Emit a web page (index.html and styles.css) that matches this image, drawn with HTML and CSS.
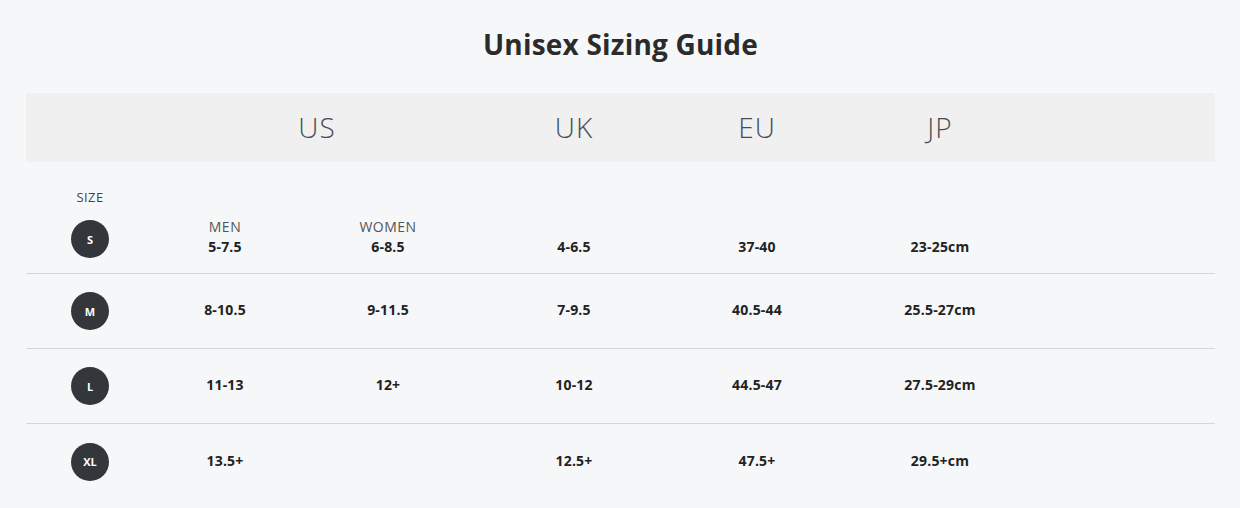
FILE: index.html
```html
<!DOCTYPE html>
<html lang="en">
<head>
<meta charset="utf-8">
<title>Unisex Sizing Guide</title>
<link rel="stylesheet" href="styles.css">
</head>
<body>
<main class="page">
  <h1 class="title">Unisex Sizing Guide</h1>
  <div class="grid head">
    <div class="cell"></div>
    <div class="cell span2">US</div>
    <div class="cell">UK</div>
    <div class="cell">EU</div>
    <div class="cell">JP</div>
    <div class="cell"></div>
  </div>
  <div class="size-label">SIZE</div>
  <div class="grid row first">
    <div class="cell"><span class="badge">S</span></div>
    <div class="cell stack"><span class="sub">MEN</span><span class="val">5-7.5</span></div>
    <div class="cell stack"><span class="sub">WOMEN</span><span class="val">6-8.5</span></div>
    <div class="cell stack"><span class="sub"></span><span class="val">4-6.5</span></div>
    <div class="cell stack"><span class="sub"></span><span class="val">37-40</span></div>
    <div class="cell stack"><span class="sub"></span><span class="val">23-25cm</span></div>
    <div class="cell"></div>
  </div>
  <div class="grid row">
    <div class="cell"><span class="badge">M</span></div>
    <div class="cell val">8-10.5</div>
    <div class="cell val">9-11.5</div>
    <div class="cell val">7-9.5</div>
    <div class="cell val">40.5-44</div>
    <div class="cell val">25.5-27cm</div>
    <div class="cell"></div>
  </div>
  <div class="grid row">
    <div class="cell"><span class="badge">L</span></div>
    <div class="cell val">11-13</div>
    <div class="cell val">12+</div>
    <div class="cell val">10-12</div>
    <div class="cell val">44.5-47</div>
    <div class="cell val">27.5-29cm</div>
    <div class="cell"></div>
  </div>
  <div class="grid row last">
    <div class="cell"><span class="badge">XL</span></div>
    <div class="cell val">13.5+</div>
    <div class="cell val"></div>
    <div class="cell val">12.5+</div>
    <div class="cell val">47.5+</div>
    <div class="cell val">29.5+cm</div>
    <div class="cell"></div>
  </div>
</main>
</body>
</html>
```

FILE: styles.css
```css
* { box-sizing: border-box; }
html, body {
  margin: 0;
  padding: 0;
  background: #f6f7f9;
  font-family: "Open Sans", "DejaVu Sans", sans-serif;
  color: #222;
}
.page {
  padding: 0 25px 0 26px;
}
.title {
  margin: 27px 0 32px;
  height: 34px;
  line-height: 34px;
  text-align: center;
  font-size: 28px;
  font-weight: 700;
  color: #2b2b2b;
  letter-spacing: 0.2px;
}
.grid {
  display: grid;
  grid-template-columns: 128px 142px 184px 188px 178px 188px 1fr;
}
.cell {
  display: flex;
  align-items: center;
  justify-content: center;
  text-align: center;
}
.head {
  height: 69px;
  background: #f0f0f0;
}
.head .cell {
  font-size: 28px;
  font-weight: 300;
  color: #4a4e54;
  letter-spacing: 1px;
  padding-bottom: 2px;
}
.head .span2 {
  grid-column: span 2;
}
.size-label {
  width: 128px;
  margin-top: 27px;
  height: 16px;
  line-height: 16px;
  text-align: center;
  font-size: 13px;
  color: #444;
  letter-spacing: 0.4px;
}
.row {
  height: 75px;
  border-bottom: 1px solid #d6d6d6;
}
.row.first {
  height: 69px;
}
.row.last {
  border-bottom: none;
}
.stack {
  flex-direction: column;
  padding-bottom: 4px;
}
.sub {
  height: 16px;
  line-height: 16px;
  margin-bottom: 3px;
  font-size: 14px;
  color: #555;
  letter-spacing: 0.5px;
}
.val {
  font-size: 14px;
  font-weight: 700;
  line-height: 18px;
  color: #222;
  letter-spacing: 0.2px;
}
.cell.val {
  padding-bottom: 2px;
}
.badge {
  width: 38px;
  height: 38px;
  border-radius: 50%;
  background: #33363b;
  color: #fff;
  font-size: 11px;
  font-weight: 700;
  letter-spacing: 0;
  display: flex;
  align-items: center;
  justify-content: center;
}
```
